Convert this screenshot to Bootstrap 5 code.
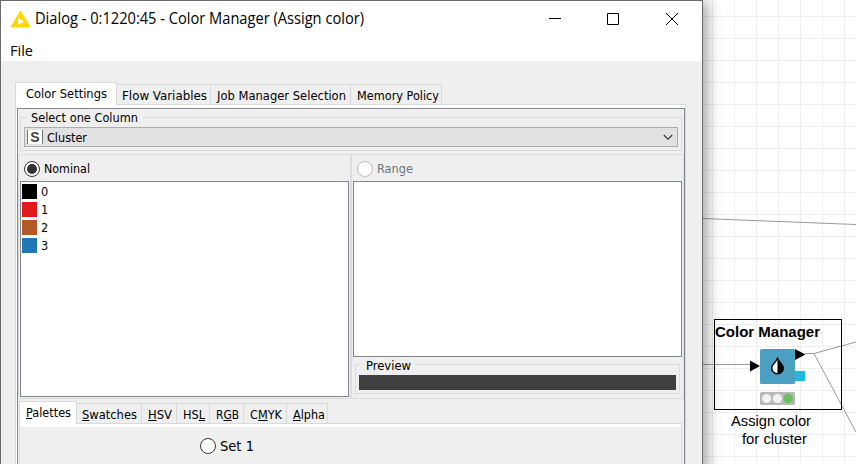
<!DOCTYPE html>
<html lang="en">
<head>
<meta charset="utf-8">
<title>Color Manager</title>
<link href="https://cdn.jsdelivr.net/npm/bootstrap@5.3.0/dist/css/bootstrap.min.css" rel="stylesheet">
<style>
html,body{height:464px;overflow:hidden}
body{background:#fff;color:#000;font-family:"DejaVu Sans Condensed","DejaVu Sans",sans-serif;font-stretch:condensed;font-size:12.6px;line-height:16px}
.desk{width:856px;height:464px}
.flowcanvas{left:0;top:0}
.dlg{width:703px;height:480px;border:1px solid #6b6b6d;background:#efefef;box-shadow:1px 3px 15px 2px rgba(0,0,0,.42)}
.titlebar{height:36px;padding-left:9px;font-family:"Open Sans","Noto Sans",sans-serif;font-stretch:normal;font-size:15.4px}
.titletext{margin-left:4px;white-space:nowrap;width:495px}
.menubar{height:24px;padding-left:9px;font-family:"Open Sans","Noto Sans",sans-serif;font-stretch:normal;font-size:14.4px;line-height:28px}
.t{display:inline-block;white-space:nowrap;transform-origin:0 50%}
.tabsrow{height:23px;margin:21px 0 0 14px}
.tb{border:1px solid #d9d9d9;border-left:0;height:21px;padding-left:5px;padding-top:3px;white-space:nowrap}
.tb.on{border-left:1px solid #d9d9d9;border-bottom:0;background:#fff;height:23px;padding-left:10px;padding-top:3px}
.tb.shift{padding-left:6px}
.fill{border-bottom:1px solid #d9d9d9}
.pane{width:671px;height:380px;margin-left:14px;border:solid #d9d9d9;border-width:0 1px;background:#fff;padding:3px 0 0 1px}
.inner{border:1px solid #828790;height:380px;width:668px;background:#efefef}
.grp{border:1px solid #dcdcdc;margin:0;padding:0}
.grp legend{float:none;width:auto;height:16px;font-size:12.6px;line-height:18px;margin:0 0 0 5px;padding:0 5px}
.g1{width:662px;height:42px;margin-left:2px}
.combo{width:654px;height:20px;background:#e1e1e1;border:1px solid #adadad;margin:2px 0 0 3px;padding-left:2px}
.comboval{line-height:18px;padding-top:1px}
.sicon{width:16px;height:14px;border:solid #777;border-width:0 1px;background:#fff;font:bold 14px/15px "Liberation Sans",sans-serif;color:#444;text-align:center}
.split{height:245px;border:1px solid #dcdcdc;width:666px;margin-top:3px}
.lst{background:#fff;border:1px solid #828790}
.sw{width:15px;height:15px}
.rad{width:16px;height:16px;border:1px solid #333;border-radius:50%;background:#fff;flex:none}
.rad.sel::after{content:"";width:10px;height:10px;border-radius:50%;background:#333}
.rad.off{border-color:#bcbcbc}
.leftp{width:331px;padding-left:1px}
.divi{width:2px;background:#dcdcdc}
.prev{width:325px;height:38px;margin:-1px 0 0 3px}
.prev legend{line-height:20px}
.bar{width:317px;height:15px;background:#404040;margin:3px 0 0 3px}
.item{height:18px;gap:4px}
.item span{line-height:16px}
.head{height:26px;padding-top:1px}
.headoff{padding-left:5px}
.lone{width:329px;height:216px;padding:2px 0 0 1px}
.ltwo{width:329px;height:176px;margin-left:1px}
.sub{width:663px;height:80px;margin-left:1px}
.subtabs{height:23px;margin-top:2px}
.subtabs .on{height:23px;padding-left:6px}
.subtabs .tb:not(.on){padding-left:6px}
.subtabs .tb.near{padding-left:5px}
.subpane{border:solid #dcdcdc;border-width:0 1px;background:#efefef;height:60px}
.white3{height:3px;background:#fff}
.setrow{padding:10px 0 0 180px;font-size:14.5px;line-height:18px}
</style>
<script src="https://cdn.jsdelivr.net/npm/bootstrap@5.3.0/dist/js/bootstrap.bundle.min.js"></script>
</head>
<body>
<div class="desk position-relative overflow-hidden">
<svg class="flowcanvas position-absolute" width="856" height="464" viewBox="0 0 856 464">
 <defs><pattern id="gridp" x="712" y="16" width="22" height="22" patternUnits="userSpaceOnUse"><path d="M.5 0V22M0 .5H22" stroke="#eee" fill="none"/></pattern></defs>
 <rect width="856" height="464" fill="url(#gridp)"/>
 <path d="M702 218.5L856 224.5M702 364.5H750M805 353.5H814L856 342M814 353.5L856 432" fill="none" stroke="#999"/>
 <rect x="714.5" y="319.5" width="127" height="90" fill="none" stroke="#000"/>
 <text x="715" y="337" font-family="Liberation Sans,sans-serif" font-weight="bold" font-size="14.6" textLength="105" lengthAdjust="spacingAndGlyphs">Color Manager</text>
 <rect x="760" y="349" width="35" height="35" rx="1.5" fill="#4b9fc0"/>
 <path d="M750 360.500L760 366L750 371.500ZM795 349L805.500 354.500L795 360Z" fill="#000"/>
 <rect x="795" y="371" width="10" height="10" fill="#20b8de"/>
 <path d="M777.500 357.500C776 362 771.500 364 771.500 368.500A6 5.500 0 0 0 783.500 368.500C783.500 364 779 362 777.500 357.500Z" fill="#000" stroke="#000" stroke-width="1"/>
 <path d="M777.500 359.500C776 363 772.500 365 772.500 368.500A5 4.700 0 0 0 777.500 373Z" fill="#fff"/>
 <rect x="760" y="392" width="35" height="13" rx="1.500" fill="#b9b9b9"/>
 <circle cx="766.700" cy="398.500" r="4.600" fill="#f2f2f2"/><circle cx="777.500" cy="398.500" r="4.600" fill="#f2f2f2"/><circle cx="788.300" cy="398.500" r="4.800" fill="#6abf5e"/>
 <g font-family="Liberation Sans,sans-serif" font-size="14.600"><text x="731" y="426" textLength="80" lengthAdjust="spacingAndGlyphs">Assign color</text><text x="742" y="444" textLength="65" lengthAdjust="spacingAndGlyphs">for cluster</text></g>
</svg>
<div class="dlg position-relative">
 <div class="bg-white">
  <div class="titlebar d-flex align-items-center">
   <svg class="flex-shrink-0" width="21" height="18" viewBox="0 0 21 18"><path d="M10.500 1L20 17H1Z" fill="#ffd800" stroke="#ffd800" stroke-linejoin="round"/><path d="M8 8V15L14.500 11.500Z" fill="#fff"/></svg>
   <div class="titletext flex-shrink-0"><span class="t" data-w="329">Dialog - 0:1220:45 - Color Manager (Assign color)</span></div>
   <svg class="flex-shrink-0" width="154" height="14" viewBox="0 0 154 14"><path d="M19 6.500H31M77.500 1.500H88.500V12.500H77.500Z" fill="none" stroke="#000"/><path d="M136 1L148 13M148 1L136 13" stroke="#000"/></svg>
  </div>
  <div class="menubar"><span class="t" data-w="23">File</span></div>
 </div>
 <div class="tabsrow d-flex align-items-end">
  <div class="tb on" style="width:102px"><span class="t" data-w="81">Color Settings</span></div>
  <div class="tb" style="width:94px"><span class="t" data-w="85">Flow Variables</span></div>
  <div class="tb shift" style="width:140px"><span class="t" data-w="129">Job Manager Selection</span></div>
  <div class="tb shift" style="width:91px"><span class="t" data-w="82">Memory Policy</span></div>
  <div class="fill" style="width:244px"></div>
 </div>
 <div class="pane">
  <div class="inner">
   <fieldset class="grp g1"><legend><span class="t" data-w="107">Select one Column</span></legend>
    <div class="combo d-flex align-items-center"><div class="sicon">S</div><div class="comboval flex-grow-1 ms-1"><span class="t" data-w="40">Cluster</span></div>
    <svg class="me-1" width="10" height="8" viewBox="0 0 10 8"><path d="M.8 2L5 6.200L9.200 2" fill="none" stroke="#333" stroke-width="1.100"/></svg></div>
   </fieldset>
   <div class="split d-flex">
    <div class="leftp">
     <div class="d-flex align-items-center gap-1 ps-1 head"><span class="rad sel d-flex align-items-center justify-content-center"></span><span class="t" data-w="46">Nominal</span></div>
     <div class="lst lone">
      <div class="d-flex item"><i class="sw" style="background:#000"></i><span>0</span></div>
      <div class="d-flex item"><i class="sw" style="background:#e31a1c"></i><span>1</span></div>
      <div class="d-flex item"><i class="sw" style="background:#b15928"></i><span>2</span></div>
      <div class="d-flex item"><i class="sw" style="background:#1f78b4"></i><span>3</span></div>
     </div>
    </div>
    <div class="divi"></div>
    <div class="rightp">
     <div class="d-flex align-items-center gap-1 head headoff text-secondary"><span class="rad off"></span><span class="t" data-w="36">Range</span></div>
     <div class="lst ltwo"></div>
     <fieldset class="grp prev"><legend><span class="t" data-w="45">Preview</span></legend><div class="bar"></div></fieldset>
    </div>
   </div>
   <div class="sub">
    <div class="subtabs d-flex align-items-end">
     <div class="tb on" style="width:58px"><span class="t" data-w="45"><u>P</u>alettes</span></div>
     <div class="tb near" style="width:65px"><span class="t" data-w="55"><u>S</u>watches</span></div>
     <div class="tb" style="width:35px"><span class="t" data-w="24"><u>H</u>SV</span></div>
     <div class="tb" style="width:33px"><span class="t" data-w="22">HS<u>L</u></span></div>
     <div class="tb" style="width:34px"><span class="t" data-w="23">R<u>G</u>B</span></div>
     <div class="tb" style="width:43px"><span class="t" data-w="32">C<u>M</u>YK</span></div>
     <div class="tb" style="width:41px"><span class="t" data-w="32"><u>A</u>lpha</span></div>
     <div class="fill" style="width:354px"></div>
    </div>
    <div class="subpane"><div class="white3"></div><div class="d-flex align-items-center gap-1 setrow"><span class="rad"></span><span class="t" data-w="34">Set 1</span></div></div>
   </div>
  </div>
 </div>
</div>
</div>
<script>
// Fit each label to its designed width
document.fonts.ready.then(()=>document.querySelectorAll('[data-w]').forEach(e=>{
 const s=e.dataset.w/e.getBoundingClientRect().width;
 e.style.transform='scaleX('+s+')';
}));
</script>
</body>
</html>
